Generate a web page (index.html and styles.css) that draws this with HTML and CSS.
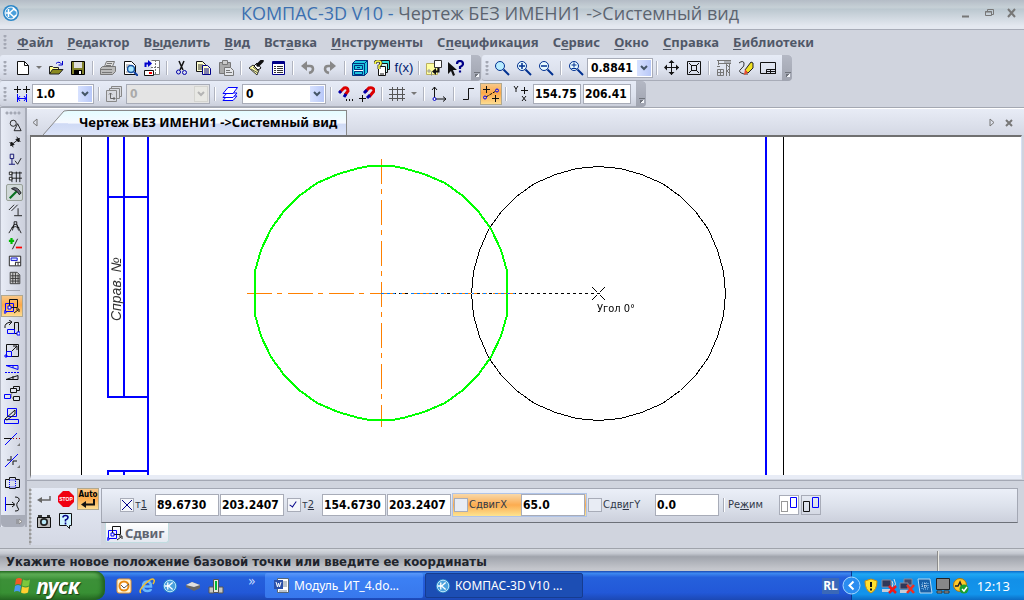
FILE: index.html
```html
<!DOCTYPE html>
<html lang="ru">
<head>
<meta charset="utf-8">
<title>КОМПАС-3D V10</title>
<link rel="stylesheet" href="styles.css">
</head>
<body>
<header class="titlebar">
  <svg class="logo" width="18" height="18" viewBox="0 0 18 18"><circle cx="9" cy="9" r="8" fill="#2a86c8"/><circle cx="9" cy="9" r="6" fill="#4aa0dc" stroke="#fff"/><path d="M6.500 5v8M12 5l-4.500 4 4.500 4M3.500 9h4M11 4l3 3M11 14l3-3" stroke="#fff" stroke-width="1.500" fill="none"/></svg>
  <h1 class="title"><span class="app">КОМПАС-3D V10 -</span> Чертеж БЕЗ ИМЕНИ1 -&gt;Системный вид</h1>
  <div class="winbtns">
    <button aria-label="Свернуть"><svg width="12" height="12"><path d="M2 9.500h7" stroke="#777" stroke-width="2"/></svg></button>
    <button aria-label="Восстановить"><svg width="12" height="12" fill="none" stroke="#777"><path d="M4.500 4V2.500h6v5H9M2 5h7" /><path d="M2.500 4.500h6v4h-6z"/></svg></button>
    <button aria-label="Закрыть"><svg width="12" height="12"><path d="M2 2l7 8M9 2l-7 8" stroke="#777" stroke-width="2"/></svg></button>
  </div>
</header>

<nav class="menubar">
  <span class="grip"></span>
  <a href="#"><u>Ф</u>айл</a><a href="#"><u>Р</u>едактор</a><a href="#">В<u>ы</u>делить</a><a href="#"><u>В</u>ид</a><a href="#">Вст<u>а</u>вка</a><a href="#"><u>И</u>нструменты</a><a href="#">С<u>п</u>ецификация</a><a href="#">С<u>е</u>рвис</a><a href="#"><u>О</u>кно</a><a href="#"><u>С</u>правка</a><a href="#"><u>Б</u>иблиотеки</a>
</nav>

<div class="bars">
 <div class="barrow">
  <div class="bar">
   <span class="grip"></span>
   <button class="tb" aria-label="Создать"><svg class="i" viewBox="0 0 16 16"><path d="M2.500 1.500h7l4 4v9h-11z" fill="#fff" stroke="#111"/><path d="M9.500 1.500v4h4" fill="none" stroke="#111"/></svg></button>
   <button class="drop" aria-label="Список"><svg width="7" height="4"><path d="M0 0h6l-3 3z" fill="#777"/></svg></button>
   <button class="tb" aria-label="Открыть"><svg class="i" viewBox="0 0 16 16"><path d="M1.500 14V6.500h3l1 1h5v2" fill="#ffff90" stroke="#222"/><path d="M1.500 14l3-4.500H15L11 14z" fill="#8a8a20" stroke="#222"/><path d="M8 3.500q3-3 6 1M14.500 1v4h-4" fill="none" stroke="#00c"/></svg></button>
   <button class="tb" aria-label="Сохранить"><svg class="i" viewBox="0 0 16 16"><path d="M1.500 1.500h13v13h-13z" fill="#80802a" stroke="#000"/><path d="M4 2h8v6H4z" fill="#ddd"/><path d="M4 10h8v4H4z" fill="#000"/><path d="M9 11h2v3H9z" fill="#fff"/></svg></button>
   <i class="sep"></i>
   <button class="tb" aria-label="Печать"><svg class="i" viewBox="0 0 16 16" fill="#ddd" stroke="#777"><path d="M4.500 6.500l2-5h8l-2 5"/><path d="M7 3.500h5M6 5.500h5"/><path d="M.5 8.500l2-2h13v5l-3 3H.5z" fill="#bbb"/><path d="M1 9.500h11M2 12.500h10"/></svg></button>
   <button class="tb" aria-label="Просмотр"><svg class="i" viewBox="0 0 16 16"><path d="M2.500 1.500h7l4 4v9h-11z" fill="#fff" stroke="#111"/><path d="M4 5h4M4 7h2M4 12h3" stroke="#888"/><circle cx="9" cy="9" r="3.500" fill="#a8e8ff" stroke="#1550a0" stroke-width="1.500"/><path d="M12 12l4 4" stroke="#1040a0" stroke-width="2"/></svg></button>
   <button class="tb" aria-label="Компоновка"><svg class="i" viewBox="0 0 16 16"><path d="M7.500.5h8v14h-8" fill="#fff" stroke="#777"/><path d="M11.500 0v15M7 7.500h9" stroke="#777" stroke-dasharray="2 1"/><path d="M1.500 7V3.500h3" stroke="#00c" stroke-width="2" fill="none"/><path d="M4 0l4 3.500L4 7z" fill="#00c"/><path d="M.5 10.500h9v5h-9z" fill="#fff" stroke="#111"/><path d="M5 13h3" stroke="red" stroke-width="2"/></svg></button>
   <i class="sep"></i>
   <button class="tb" aria-label="Вырезать"><svg class="i" viewBox="0 0 16 16" fill="none"><path d="M5 1l4 9M10 1L6 10" stroke="#111" stroke-width="1.500"/><circle cx="4.500" cy="12" r="2" stroke="#00a"/><circle cx="10.500" cy="12.500" r="2" stroke="#00a"/></svg></button>
   <button class="tb" aria-label="Копировать"><svg class="i" viewBox="0 0 16 16"><path d="M.5 1.500h6l3 3v7h-9z" fill="#ffffd0" stroke="#111"/><path d="M2 5h5M2 7h4M2 9h4" stroke="#333"/><path d="M6.500 5.500h5l3 3v6h-8z" fill="#ffffd0" stroke="#008"/><path d="M8 9h5M8 11h5M8 13h5" stroke="#008"/></svg></button>
   <button class="tb" aria-label="Вставить"><svg class="i" viewBox="0 0 16 16" stroke="#777"><path d="M1.500 2.500h11v11h-11z" fill="#aaa"/><path d="M4.500.5h5v4h-5z" fill="#ccc"/><path d="M6.500 7.500h6l3 3v5h-9z" fill="#e4e6ea"/><path d="M8 10.500h4M8 12.500h6"/></svg></button>
   <i class="sep"></i>
   <button class="tb" aria-label="Свойства"><svg class="i" viewBox="0 0 16 16"><path d="M1 8l4-3 6 5-2 5z" fill="#ffffa0" stroke="#333"/><path d="M3 9l7 4M5 7l5 4" stroke="#555"/><path d="M6 6l3-3 4 5-3 2z" fill="#fff" stroke="#111"/><path d="M10 5l4-4" stroke="#111" stroke-width="3.500" stroke-linecap="round"/></svg></button>
   <button class="tb" aria-label="Таблица"><svg class="i" viewBox="0 0 16 16"><path d="M2.500 1.500h12v13h-12z" fill="#fff" stroke="#008"/><path d="M2 2h13v2H2z" fill="#008"/><path d="M4 6.500h2M4 8.500h2M4 10.500h2M4 12.500h2M7 6.500h6M7 8.500h6M7 10.500h6M7 12.500h6" stroke="#333"/></svg></button>
   <i class="sep"></i>
   <button class="tb" aria-label="Отменить"><svg class="i" viewBox="0 0 16 16"><path d="M5 6h5q3 0 3 3t-4 4" fill="none" stroke="#888" stroke-width="2.500"/><path d="M1 6l6-5v10z" fill="#888"/></svg></button>
   <button class="tb" aria-label="Повторить"><svg class="i" viewBox="0 0 16 16"><path d="M10 6H6q-3 0-3 3t4 4" fill="none" stroke="#888" stroke-width="2.500"/><path d="M14 6L8 1v10z" fill="#888"/></svg></button>
   <i class="sep"></i>
   <button class="tb" aria-label="Менеджер"><svg class="i" viewBox="0 0 16 16"><path d="M.5 3.500l3-3h12v12l-3 3H.5z" fill="#20c8e0" stroke="#003080"/><path d="M.5 3.500h12v12M12.500 3.500l3-3M2.500 5.500h8v4h-8zM2.500 11.500h8v3h-8zM5 7.500h3" fill="none" stroke="#003080"/><path d="M2 10.500h9" stroke="#fff"/></svg></button>
   <button class="tb" aria-label="Библиотеки"><svg class="i" viewBox="0 0 16 16"><path d="M6.500.5h9v9h-9z" fill="#30e0e0" stroke="#111"/><path d="M5.500 3.500h8v9h-8z" fill="#c8f4f4" stroke="#111"/><path d="M4.500 6.500h7v9h-7z" fill="#fff" stroke="#111"/><path d="M6 14h4" stroke="#111"/><path d="M1 4q0-3 3-3t3 2q0 2-2 3v3" fill="none" stroke="#333" stroke-width="3"/><path d="M1 4q0-3 3-3t3 2q0 2-2 3v3" fill="none" stroke="#ff4" stroke-width="1.500"/></svg></button>
   <button class="tb fx" aria-label="Переменные">f(x)</button>
   <i class="sep"></i>
   <button class="tb" aria-label="Обновить"><svg class="i" viewBox="0 0 16 16"><path d="M.5 3.500h11v11H.5z" fill="#ffffa0" stroke="#bbb060"/><path d="M8.500.5h7v7h-7z" fill="#fff" stroke="#333"/><path d="M5.500 15.500v-4" fill="none" stroke="#888"/><path d="M3 9v4M1 11h4" stroke="#999"/><path d="M12.500 8v3.500H9" fill="none" stroke="#111" stroke-width="2"/><path d="M10 8v7l-4-3.500z" fill="#111"/></svg></button>
   <button class="tb" aria-label="Справка"><svg class="i" viewBox="0 0 16 16"><path d="M0 2v12l3-3 2 5 2-1-2-5h4z" fill="#111"/><path d="M9 4q0-3 3-3t3 3q0 2-3 3v2M12 10.500v2" fill="none" stroke="#008" stroke-width="2.200"/></svg></button>
   <span class="cap"></span>
  </div>
  <div class="bar">
   <span class="grip"></span>
   <button class="tb" aria-label="Лупа"><svg class="i" viewBox="0 0 16 16"><circle cx="6" cy="6" r="4.500" fill="#b8ecff" stroke="#003090"/><path d="M9.500 9.500l5.500 5.500" stroke="#003090" stroke-width="2"/></svg></button>
   <button class="tb" aria-label="Увеличить"><svg class="i" viewBox="0 0 16 16"><circle cx="6" cy="6" r="4.500" fill="#e8faff" stroke="#003090"/><path d="M9.500 9.500l5.500 5.500" stroke="#003090" stroke-width="2"/><path d="M3 6h6M6 3v6" stroke="#003090" stroke-width="1.500"/></svg></button>
   <button class="tb" aria-label="Уменьшить"><svg class="i" viewBox="0 0 16 16"><circle cx="6" cy="6" r="4.500" fill="#e8faff" stroke="#003090"/><path d="M9.500 9.500l5.500 5.500" stroke="#003090" stroke-width="2"/><path d="M3 6h6" stroke="#003090" stroke-width="1.500"/></svg></button>
   <i class="sep"></i>
   <button class="tb" aria-label="Масштаб"><svg class="i" viewBox="0 0 16 16"><circle cx="6" cy="6" r="4.500" fill="#e8faff" stroke="#003090"/><path d="M9.500 9.500l5.500 5.500" stroke="#003090" stroke-width="2"/><path d="M3.500 5h5M6 2.500v5M3.500 8.500h5" stroke="#003090"/></svg></button>
   <span class="combo w66"><select aria-label="Масштаб"><option>0.8841</option></select><i class="arr"><svg width="8" height="6"><path d="M1 1l3 3 3-3" fill="none" stroke="#456" stroke-width="2"/></svg></i></span>
   <i class="sep"></i>
   <button class="tb" aria-label="Сдвинуть"><svg class="i" viewBox="0 0 16 16"><path d="M7.500 1v14M1 7.500h14" stroke="#111"/><path d="M7.500 0l3 3h-6zM7.500 15l3-3h-6zM0 7.500l3-3v6zM15 7.500l-3-3v6z" fill="#111"/></svg></button>
   <button class="tb" aria-label="Показать все"><svg class="i" viewBox="0 0 16 16" fill="none" stroke="#111"><path d="M1.500 1.500h13v13h-13zM5.500 5.500h5v5h-5zM3 3l3 3M13 3l-3 3M3 13l3-3M13 13l-3-3"/></svg></button>
   <i class="sep"></i>
   <button class="tb" aria-label="Кран"><svg class="i" viewBox="0 0 16 16" fill="none" stroke="#777"><path d="M1 .5h14M3 3.500h12M8 2h7M2.500 1v4M10.500 4v12M13.500 4v12" /><path d="M11 5l3 3-3 3 3 3" /><path d="M1.500 9.500h6v6h-6zM1 12.500h6M4.500 9v6"/><path d="M1 6.500h3"/></svg></button>
   <button class="tb" aria-label="Карандаш"><svg class="i" viewBox="0 0 16 16"><path d="M1 3q4-3 5 0t-3 6 3 5h4" fill="none" stroke="#333"/><path d="M7 10l6-8 2 1v5l-5 5z" fill="#f0e020" stroke="#222"/><path d="M7 9l3 4-4 2z" fill="#e85030"/></svg></button>
   <button class="tb" aria-label="Штамп"><svg class="i" viewBox="0 0 16 16" fill="none" stroke="#111"><path d="M.5 2.500h15v11H.5z"/><path d="M6.500 9.500h9v4h-9zM7 11.500h8M10.500 10v3"/></svg></button>
   <span class="cap"></span>
  </div>
 </div>
 <div class="barrow">
  <div class="bar">
   <span class="grip"></span>
   <button class="tb n" aria-label="Шаг"><svg class="i" viewBox="0 0 16 16" fill="none"><path d="M3.500 0v7M0 3.500h7M12.500 0v7M9 3.500h7" stroke="#111"/><path d="M3.500 8v8M12.500 8v8M4 12.500h8M6 10l-2 2.500L6 15M10 10l2 2.500-2 2.500" stroke="#00f"/></svg></button>
   <span class="combo w62"><select aria-label="Шаг курсора"><option>1.0</option></select><i class="arr"><svg width="8" height="6"><path d="M1 1l3 3 3-3" fill="none" stroke="#456" stroke-width="2"/></svg></i></span>
   <i class="sep"></i>
   <button class="tb" aria-label="Вид"><svg class="i" viewBox="0 0 16 16" fill="#d8dae0" stroke="#888"><path d="M5.500.5h10v10h-10z"/><path d="M3.500 2.500h10v10h-10z"/><path d="M.5 4.500h10v11H.5z"/><path d="M4.500 7v5.500H9M3 8.500L4.500 7 6 8.500M7.500 11L9 12.500 7.500 14" fill="none" stroke="#666"/></svg></button>
   <span class="combo w84 off"><select aria-label="Номер вида" disabled><option>0</option></select><i class="arr"><svg width="8" height="6"><path d="M1 1l3 3 3-3" fill="none" stroke="#b4b4b4" stroke-width="2"/></svg></i></span>
   <i class="sep"></i>
   <button class="tb" aria-label="Слои"><svg class="i" viewBox="0 0 16 16" fill="#fff" stroke="#00f"><path d="M1 14.500L5 10h10l-4 4.500z"/><path d="M1 11.500L5 7h10l-4 4.500z"/><path d="M1 7.500L6 1.500h9.500l-4.500 6z"/></svg></button>
   <span class="combo w84"><select aria-label="Слой"><option>0</option></select><i class="arr"><svg width="8" height="6"><path d="M1 1l3 3 3-3" fill="none" stroke="#456" stroke-width="2"/></svg></i></span>
   <i class="sep"></i>
   <button class="tb m" aria-label="Привязки"><svg class="i" viewBox="0 0 16 16" fill="none"><path d="M2 6l4-4q4-1 4 3l-3 4" stroke="#d00" stroke-width="3"/><path d="M1 7l2-2M6 11l2-3" stroke="#00a" stroke-width="3"/><path d="M8 14h1M11 14h1M14 14h1" stroke="#111" stroke-width="2"/></svg></button>
   <button class="tb" aria-label="Магнит"><svg class="i" viewBox="0 0 16 16" fill="none"><path d="M6 6l4-4q5-1 5 3l-5 6" stroke="#d00" stroke-width="3"/><path d="M5 7l3-3M8 12l3-3" stroke="#00a" stroke-width="3"/><path d="M3.500 9v7M0 12.500h7" stroke="#111"/></svg></button>
   <i class="sep"></i>
   <button class="tb" aria-label="Сетка"><svg class="i" viewBox="0 0 16 16"><path d="M3.500 1v14M8.500 1v14M13.500 1v14M0 3.500h16M0 8.500h16M0 12.500h16" stroke="#555"/></svg></button>
   <button class="drop wide" aria-label="Список"><svg width="7" height="4"><path d="M0 0h6l-3 3z" fill="#777"/></svg></button>
   <i class="sep"></i>
   <button class="tb" aria-label="Система координат"><svg class="i" viewBox="0 0 16 16" fill="none" stroke="#111"><path d="M3.500 1v12H15M1 4l2.500-3L6 4M12 10.500l3 2.500-3 2.500"/><circle cx="3.500" cy="13" r="1.500" stroke="#00c" fill="#fff"/></svg></button>
   <i class="sep"></i>
   <button class="tb" aria-label="Ортогонально"><svg class="i" viewBox="0 0 16 16"><path d="M2 13.500h5.500v-11H13" fill="none" stroke="#111"/></svg></button>
   <button class="tb on" aria-label="Округление"><svg class="i" viewBox="0 0 16 16" fill="none"><path d="M3.500 0v7M0 3.500h7M12.500 9v7M9 12.500h7" stroke="#111"/><path d="M3 11l10-6" stroke="#111" stroke-dasharray="3 1"/><circle cx="2" cy="11.500" r="1.500" stroke="#00f"/><circle cx="14" cy="4.500" r="1.500" stroke="#00f"/></svg></button>
   <i class="sep"></i>
   <button class="tb" aria-label="Координаты"><svg class="i" viewBox="0 0 16 16" fill="none" stroke="#111"><path d="M1 0l2 3 2-3M3 3v3M9 10l4 5M13 10l-4 5"/><path d="M11.500 1v7M8 4.500h7"/></svg></button>
   <input class="num w48" aria-label="X" value="154.75"><input class="num w48" aria-label="Y" value="206.41">
   <span class="cap"></span>
  </div>
 </div>
</div>

<div class="work">
 <aside class="side">
  <span class="sidegrip"></span>
  <button class="sb" aria-label="Геометрия"><svg class="i" viewBox="0 0 16 16" fill="none" stroke="#111"><circle cx="6" cy="6" r="3.500"/><path d="M11 6.500l4 8H7z"/></svg></button>
  <button class="sb" aria-label="Размеры"><svg class="i" viewBox="0 0 16 16" stroke="#111"><path d="M3 12l10-8M2 8l4 6M10 2l4 6" /><path d="M3 12l1-4 3 3zM13 4l-1 4-3-3z" fill="#111"/></svg></button>
  <button class="sb" aria-label="Обозначения"><svg class="i" viewBox="0 0 16 16" fill="none" stroke="#111"><path d="M2.500 2.500h4v5h-4zM4.500 8v6M1 14h7" stroke="#006"/><path d="M8 10l3 4 4-7"/></svg></button>
  <button class="sb" aria-label="Обозначения СПДС"><svg class="i" viewBox="0 0 16 16" fill="none" stroke="#111"><path d="M4.500 3v12M9.500 3v12M13.500 3v12M3 4.500h13M3 10.500h13"/><path d="M1.500 3.500h3v3h-3zM1.500 9.500h3v3h-3z" fill="#fff"/></svg></button>
  <button class="sb press" aria-label="Редактирование"><svg class="i" viewBox="0 0 16 16"><path d="M2 14l8-8" stroke="#087020" stroke-width="2.500"/><path d="M4 3q5-3 9 2l2 3-2 2-3-4z" fill="#667" stroke="#111"/></svg></button>
  <button class="sb" aria-label="Параметризация"><svg class="i" viewBox="0 0 16 16" stroke="#111"><path d="M1 8l6-6M4 9l7-7M11.500 6v8M7 14.500h9"/></svg></button>
  <button class="sb" aria-label="Измерения"><svg class="i" viewBox="0 0 16 16" fill="none" stroke="#111"><path d="M7 2h3v3H7zM7 5L1 15M10 5l5 10M7 5l-2 7M10 5l2 7M4 9q4-3 9 0"/></svg></button>
  <button class="sb" aria-label="Выделение"><svg class="i" viewBox="0 0 16 16"><path d="M4 1v7M1 4.500h6" stroke="#0b0" stroke-width="2.500"/><path d="M11 2L5 14" stroke="#111"/><path d="M9 12h7" stroke="red" stroke-width="2"/></svg></button>
  <button class="sb" aria-label="Спецификация"><svg class="i" viewBox="0 0 16 16" fill="none" stroke="#111"><path d="M1.500 2.500h13v11h-13z" fill="#fff"/><path d="M3.500 4.500h7v3h-7z" fill="#cdf" stroke="#00c"/><path d="M8 9.500h6M8.500 10v3M11.500 10v3"/></svg></button>
  <button class="sb" aria-label="Отчеты"><svg class="i" viewBox="0 0 16 16" fill="#ccc" stroke="#333"><path d="M2.500 1.500h8l3 3v10h-11z"/><path d="M5.500 2v12M8.500 2v12M11.500 4v10M3 5.500h10M3 8.500h10M3 11.500h10"/></svg></button>
  <i class="hsep"></i>
  <button class="sb big on" aria-label="Сдвиг"><svg class="i" viewBox="0 0 16 16" fill="none"><path d="M1.500 5.500h8v8h-8z" stroke="#00f"/><path d="M5.500 1.500h8v8h-8z" stroke="#111"/><path d="M0 13h2v2H0zM4 8h3v3H4z" fill="#fff" stroke="#00f"/><path d="M10 15l4-3M12 11h3v3" stroke="#111"/></svg></button>
  <button class="sb big" aria-label="Поворот"><svg class="i" viewBox="0 0 16 16" fill="none"><path d="M10.500 2.500h4v11h-4z" stroke="#111"/><path d="M3.500 9.500h7v4h-7z" stroke="#00f"/><path d="M13 12h3v3h-3z" fill="#fff" stroke="#00f"/><path d="M1 8q-1-5 6-6M5 0l3 2-3 3" stroke="#111"/></svg></button>
  <button class="sb big" aria-label="Масштабирование"><svg class="i" viewBox="0 0 16 16" fill="none"><path d="M2.500 2.500h12v12h-12z" stroke="#111"/><path d="M2.500 9.500h5v5h-5zM1 13h2v2H1z" stroke="#00f"/><path d="M8 9l5-5M9 4h4v4" stroke="#111"/></svg></button>
  <button class="sb big" aria-label="Симметрия"><svg class="i" viewBox="0 0 16 16" fill="none"><path d="M2 1.500h12v4zM9 1v3" stroke="#00f"/><path d="M1 8.500h15" stroke="#00f" stroke-dasharray="2 1"/><path d="M2 15.500h12v-4zM9 15v-3" stroke="#111"/></svg></button>
  <button class="sb big" aria-label="Копия"><svg class="i" viewBox="0 0 16 16" fill="none"><path d="M.5 8.500h6v4h-6z" stroke="#00f"/><path d="M9.500.5h6v4h-6z" stroke="#111"/><path d="M6.500 2.500h6v4h-6zM9.500 10.500h6v4h-6z" fill="#e0e4ee" stroke="#111"/><path d="M9 13L7 10l1-3" stroke="#888"/></svg></button>
  <button class="sb big" aria-label="Деформация"><svg class="i" viewBox="0 0 16 16" fill="none"><path d="M3.500.5h9v8h-9zM.5 11.500h14v4H.5z" stroke="#00f"/><path d="M1 11L11 2v4L3 12z" stroke="#111"/></svg></button>
  <button class="sb big" aria-label="Усечь"><svg class="i" viewBox="0 0 16 16"><path d="M1 15L13 3" stroke="#00f"/><path d="M0 8.500h8" stroke="#111"/><path d="M9 8.500h7" stroke="#900" stroke-dasharray="1 2"/><path d="M16 13v3h-3z" fill="#777"/></svg></button>
  <button class="sb big" aria-label="Разбить"><svg class="i" viewBox="0 0 16 16"><path d="M1 15L14 2" stroke="#00f"/><path d="M3 8h4v-4M9 13V9h4" fill="none" stroke="#111"/><path d="M16 13v3h-3z" fill="#777"/></svg></button>
  <button class="sb big" aria-label="Контур"><svg class="i" viewBox="0 0 16 16" fill="none"><path d="M5.500 3.500h6v2h4v8h-4v1h-6v-1h-4v-8h4z" stroke="#111"/><path d="M5.500 6v7h6V6z" stroke="#00f" stroke-dasharray="1 1"/></svg></button>
  <button class="sb big" aria-label="Продлить"><svg class="i" viewBox="0 0 16 16" fill="none" stroke="#111"><path d="M1.500 1v14" stroke="#00f"/><path d="M2 8.500h8M8 6l3 2.500L8 11M11 1q5 0 4 4-4 3-1 7 2 3-3 3"/></svg></button>
  <span class="sidecap"><svg width="7" height="7"><path d="M1 1v5M3 1l3 2.500L3 6z" stroke="#888" fill="#fff"/></svg></span>
 </aside>

 <main class="doc">
  <div class="tabs">
   <button class="prev" aria-label="Назад"><svg width="6" height="10"><path d="M5 1v7L1 4.500z" fill="none" stroke="#777"/></svg></button>
   <svg class="slant" width="25" height="25" viewBox="0 0 25 25"><defs><linearGradient id="tg" x2="0" y2="1"><stop offset="0" stop-color="#e4fdff"/><stop offset=".5" stop-color="#f6f9ff"/><stop offset=".55" stop-color="#cfdaf5"/><stop offset="1" stop-color="#dce4f8"/></linearGradient></defs><path d="M0 25L21 1l4-1v25z" fill="url(#tg)"/><path d="M0 25L21 1l4-.5" fill="none" stroke="#888"/></svg>
   <a class="tab" href="#">Чертеж БЕЗ ИМЕНИ1 -&gt;Системный вид</a>
   <div class="tabend"><button aria-label="Вперед"><svg width="6" height="10"><path d="M1 1v7l4-3.500z" fill="none" stroke="#777"/></svg></button><button aria-label="Закрыть вкладку"><svg width="8" height="8"><path d="M1 1l6 6M7 1L1 7" stroke="#777" stroke-width="2"/></svg></button></div>
  </div>
  <div class="canvas">
   <svg class="drawing" height="336">
    <g transform="translate(-31 -137)" shape-rendering="crispEdges" fill="none">
     <path d="M81.500 137v900M783.500 137v900" stroke="#000"/>
     <path d="M148 137v900M766 137v900M108 137v261M124 137v260M108 197h40M107 397h41M107 471h41M108 471v300M124 471v300" stroke="#00f" stroke-width="2"/>
     <path d="M247 293.500h268" stroke="#ff8000" stroke-dasharray="25 5 5 6"/>
     <path d="M381.500 159v268" stroke="#ff8000" stroke-dasharray="25 5 5 6"/>
     <polygon transform="translate(598.500 293.500)" stroke="#000" points="127,0 125,22 119,43 110,64 97,82 82,97 64,110 43,119 22,125 0,127 -22,125 -43,119 -64,110 -82,97 -97,82 -110,64 -119,43 -125,22 -127,0 -125,-22 -119,-43 -110,-64 -97,-82 -82,-97 -64,-110 -43,-119 -22,-125 0,-127 22,-125 43,-119 64,-110 82,-97 97,-82 110,-64 119,-43 125,-22"/>
     <polygon transform="translate(381 293)" stroke="#0f0" stroke-width="2" points="126,0 126,22 120,43 110,64 97,82 82,97 64,110 43,119 22,125 11,127 -11,127 -22,125 -43,119 -64,110 -82,97 -97,82 -110,64 -120,43 -126,22 -126,-22 -120,-43 -110,-64 -97,-82 -82,-97 -64,-110 -43,-119 -22,-125 -11,-127 11,-127 22,-125 43,-119 64,-110 82,-97 97,-82 110,-64 120,-43 126,-22"/>
     <path class="rubber" d="M381 293.500h213" stroke="#fff" stroke-dasharray="3 3"/>
     <path d="M592 287l5 5M605 287l-5 5M592 300l5-5M605 300l-5-5M597 293.500h3" stroke="#000"/>
    </g>
    <g transform="translate(-31 -137)">
     <text class="angle" x="597" y="312">Угол 0°</text>
     <text class="stamp" transform="translate(121 321) rotate(-90)">Справ. №</text>
    </g>
   </svg>
  </div>
  <section class="props">
   <div class="cmds">
    <button class="cb" aria-label="Ввод"><svg class="i" viewBox="0 0 16 16"><path d="M4 9h10V5" fill="none" stroke="#666" stroke-width="1.500"/><path d="M1 9l5-3v6z" fill="#666"/></svg></button>
    <button class="cb" aria-label="Прервать"><svg class="i" viewBox="0 0 16 16"><path d="M5 0h6l5 5v6l-5 5H5l-5-5V5z" fill="#f00010"/><text class="stop" x="8" y="10">STOP</text></svg></button>
    <button class="cb on auto" aria-label="Автосоздание"><span>Auto</span><svg width="16" height="9"><path d="M4 5.500h10V0" fill="none" stroke="#111" stroke-width="2"/><path d="M1 5.500L6 2v7z" fill="#111"/></svg></button>
    <button class="cb" aria-label="Запомнить"><svg class="i" viewBox="0 0 16 16"><path d="M1.500 4.500h13v10h-13z" fill="#bbb" stroke="#111"/><path d="M2 2h4v2H2zM11 2h3v2h-3z" fill="#333"/><circle cx="8" cy="9" r="4" fill="#222"/><circle cx="8" cy="9" r="2.300" fill="#b8e8f8"/></svg></button>
    <button class="cb" aria-label="Помощь"><svg class="i" viewBox="0 0 16 16"><path d="M1.500.5h12v12h-2v3l-3-3h-7z" fill="#d0f4ff" stroke="#111"/><path d="M5 4.500q0-2 2.500-2t2.500 2q0 1.500-2.500 2.500v1.500M7.500 9.500v2" fill="none" stroke="#008" stroke-width="1.600"/></svg></button>
   </div>
   <div class="params">
    <div class="panel">
     <input type="checkbox" class="ck cross" id="t1"><label class="s" for="t1">т<u>1</u></label>
     <input class="num w64" aria-label="т1 X" value="89.6730"><input class="num w64" aria-label="т1 Y" value="203.2407">
     <input type="checkbox" class="ck tick" id="t2" checked><label class="s" for="t2">т<u>2</u></label>
     <input class="num w64" aria-label="т2 X" value="154.6730"><input class="num w64" aria-label="т2 Y" value="203.2407">
     <div class="hot"><input type="checkbox" class="ck" id="dx"><label class="l" for="dx">С<u>д</u>вигX</label><input class="num w64" aria-label="Сдвиг X" value="65.0"></div>
     <input type="checkbox" class="ck" id="dy"><label class="l" for="dy">Сдв<u>и</u>гY</label>
     <input class="num w64" aria-label="Сдвиг Y" value="0.0">
     <i class="psep"></i><span class="mode">Ре<u>ж</u>им</span>
     <button class="mb lit" aria-label="Удалять исходные"><svg width="18" height="18" fill="none"><path d="M1.500 5.500h6v10h-6z" stroke="#333" stroke-dasharray="1 1"/><path d="M10.500 1.500h6v10h-6z" stroke="#00f"/></svg></button>
     <button class="mb" aria-label="Оставлять исходные"><svg width="18" height="18" fill="none"><path d="M1.500 5.500h6v10h-6z" stroke="#111"/><path d="M10.500 1.500h6v10h-6z" stroke="#00f"/></svg></button>
    </div>
    <a class="ptab" href="#"><svg class="i" viewBox="0 0 16 16" fill="none"><path d="M1.500 5.500h8v8h-8z" stroke="#00f"/><path d="M5.500 1.500h8v8h-8z" stroke="#111"/><path d="M0 13h2v2H0zM4 8h3v3H4z" fill="#fff" stroke="#00f"/><path d="M10 15l4-3M12 11h3v3" stroke="#111"/></svg>Сдвиг</a>
   </div>
  </section>
 </main>
</div>

<footer class="status"><span>Укажите новое положение базовой точки или введите ее координаты</span><i></i></footer>

<div class="taskbar">
 <button class="start"><svg width="20" height="20" viewBox="0 0 20 20"><path d="M3 3q3-2 6 0l-1 6q-3-2-6 0z" fill="#f05a28"/><path d="M10 3.500q4 2 7 0l-1 6q-4 2-7 0z" fill="#7cc83c"/><path d="M2 10q3-2 6 0l-1 6q-3-2-6 0z" fill="#4a9af0"/><path d="M9 10.500q4 2 7 0l-1 6q-4 2-7 0z" fill="#ffd030"/></svg>пуск</button>
 <div class="quick">
  <button aria-label="Outlook"><svg class="i" viewBox="0 0 16 16"><rect x="1" y="1" width="14" height="14" rx="2" fill="#fff4d8" stroke="#e89830"/><circle cx="8" cy="8" r="4.500" fill="#fff" stroke="#e88a10" stroke-width="2"/><path d="M5 7l3 3 5-4" stroke="#555" fill="none"/></svg></button>
  <button aria-label="Internet Explorer"><svg class="i" viewBox="0 0 16 16"><path d="M4 8.500h8q0-5-4-5t-4 5q0 4.500 4.500 4.500 3 0 3.500-2" fill="none" stroke="#68b8ff" stroke-width="2.500"/><path d="M2 15q-3-2 4-9t9-4q1 1-1 4" fill="none" stroke="#f0c030" stroke-width="1.500"/></svg></button>
  <button aria-label="КОМПАС"><svg class="i" viewBox="0 0 18 18"><circle cx="9" cy="9" r="8" fill="#2a86c8"/><circle cx="9" cy="9" r="6.500" fill="#4aa0dc" stroke="#cef"/><path d="M6.500 5v8M12 5l-4.500 4 4.500 4M3 9h4" stroke="#fff" stroke-width="1.500" fill="none"/></svg></button>
  <button aria-label="Диск"><svg class="i" viewBox="0 0 16 16"><path d="M1 7l6-3 8 3v3l-6 3-8-4z" fill="#666"/><path d="M1 7l6-3 8 3-6 2z" fill="#e0e0e0"/></svg></button>
  <button aria-label="Устройство"><svg class="i" viewBox="0 0 16 16"><path d="M1 9h5v6H1zM10 9h5v6h-5z" fill="#c8c8c0" stroke="#555"/><path d="M5.500 1.500h5v13h-5z" fill="#e8e8e0" stroke="#555"/><path d="M7 3h2v9H7z" fill="#0b3"/></svg></button>
  <span class="more">»</span>
 </div>
 <button class="task"><svg class="i" viewBox="0 0 16 16"><path d="M3.500.5h11v14h-11z" fill="#fff" stroke="#567"/><path d="M9 4h4M9 6h4M9 8h4M5 13h8" stroke="#789"/><path d="M0 2h9v9H0z" fill="#2a50a8"/><path d="M2 4l1.500 5 1-4 1 4L7 4" fill="none" stroke="#fff"/></svg>Модуль_ИТ_4.do...</button>
 <button class="task cur"><svg class="i" viewBox="0 0 18 18"><circle cx="9" cy="9" r="8" fill="#2a86c8"/><circle cx="9" cy="9" r="6.500" fill="#4aa0dc" stroke="#cef"/><path d="M6.500 5v8M12 5l-4.500 4 4.500 4M3 9h4" stroke="#fff" stroke-width="1.500" fill="none"/></svg>КОМПАС-3D V10 ...</button>
 <span class="lang">RL</span>
 <div class="tray">
  <button class="hide" aria-label="Скрыть"><svg width="19" height="19" viewBox="0 0 19 19"><circle cx="9.500" cy="9.500" r="8.500" fill="#2a8cf0" stroke="#a8d8ff"/><path d="M11.500 5.500l-4 4 4 4" fill="none" stroke="#fff" stroke-width="2"/></svg></button>
  <svg class="i" viewBox="0 0 16 16"><path d="M8 1l6 2q0 9-6 12Q2 12 2 3z" fill="#ffe030" stroke="#c89010"/><path d="M8 4v5M8 10.500v2" stroke="#111" stroke-width="2"/></svg>
  <svg class="i" viewBox="0 0 16 16"><path d="M1 2h9v7H1z" fill="#303858" stroke="#889"/><path d="M1 11h8v3H1z" fill="#c8ccd8"/><path d="M11 3q2 3 0 6M13 1q3 5 0 9" stroke="#ddd" fill="none"/><path d="M8 8l7 7M15 8l-7 7" stroke="#f01818" stroke-width="2.500"/></svg>
  <svg class="i" viewBox="0 0 16 16"><path d="M5 1h8v6H5z" fill="#404868" stroke="#889"/><path d="M1 5h8v6H1z" fill="#303858" stroke="#889"/><path d="M1 12h8v3H1z" fill="#c8ccd8"/><path d="M8 7l7 8M15 7l-7 8" stroke="#f03020" stroke-width="2.500"/></svg>
  <svg class="i" viewBox="0 0 16 16"><path d="M1 1h12l2 14H3z" fill="#1860a8" stroke="#b8d8f0"/><path d="M5 5h6v6H5z" fill="none" stroke="#8cf" stroke-dasharray="1 1"/><path d="M8 5v6M5 8h6" stroke="#fff" stroke-dasharray="1 1"/></svg>
  <svg class="i" viewBox="0 0 16 16"><path d="M1.500.5h13v11h-13z" fill="#888" stroke="#222"/><path d="M2 13h5v2H2zM9 13h5v2H9z" fill="#aaa" stroke="#333"/></svg>
  <svg class="i" viewBox="0 0 16 16"><circle cx="7" cy="7" r="6.500" fill="#ffc828" stroke="#a87810"/><path d="M2 8h3l2-4 2 5" stroke="#222" fill="none" stroke-width="1.500"/><circle cx="11" cy="11" r="4.500" fill="#18a030"/><path d="M9 11l2 2 3-4" stroke="#fff" fill="none" stroke-width="1.500"/></svg>
  <time>12:13</time>
 </div>
</div>
</body>
</html>
```

FILE: styles.css
```css
* { box-sizing: border-box; }
body {
  margin: 0;
  min-height: 100vh;
  display: flex;
  flex-direction: column;
  background: #d0d4de;
  font-family: "DejaVu Sans Condensed", "Noto Sans", sans-serif;
  font-size: 12px;
  color: #000;
  overflow: hidden;
}
button, input, select { font: inherit; margin: 0; padding: 0; border: 0; background: none; color: inherit; border-radius: 0; }
a { color: inherit; text-decoration: none; }
button { display: flex; align-items: center; justify-content: center; flex: none; }
svg { flex: none; display: block; }
.i { width: 16px; height: 16px; }

.titlebar {
  height: 30px; flex: none;
  display: flex; align-items: center;
  padding: 0 6px 4px 2px;
  background: linear-gradient(#b4bcc6, #c6d0d6 25%, #bcc8d0 32%, #e4e8f0 90%);
  border-bottom: 1px solid #a8acb8;
}
.title { flex: 1; margin: 0; text-align: center; font: 18px/24px "Open Sans", "Noto Sans", sans-serif; color: #5c6470; white-space: nowrap; }
.app { color: #3c70b0; }
.winbtns { display: flex; gap: 11px; }

.menubar {
  height: 25px; flex: none;
  display: flex; align-items: center; gap: 14px;
  padding-bottom: 1px;
  font: bold 13px/18px "Noto Sans", sans-serif;
  color: #505868;
}
.menubar .grip { margin-right: -9px; }
.menubar u { text-underline-offset: 2px; }
.grip { width: 12px; height: 14px; flex: none; background: radial-gradient(circle at 5px 1px, #a4a8b4 1px, transparent 2px) 0 0 / 12px 4px; }

.bars { flex: none; border-bottom: 1px solid #a4a8b2; }
.barrow { display: flex; gap: 1px; height: 26px; }
.bar {
  display: flex; align-items: center;
  background: linear-gradient(#e6ebf6, #dde2ee 60%, #ccd0dc);
  border-bottom: 1px solid #a8acb8;
  border-radius: 3px 3px 5px 3px;
}
.bar + .bar .grip { width: 9px; }
.bar + .bar .tb + .cap { margin-left: 3px; }
.tb { width: 22px; height: 22px; }
.tb.n { width: 19px; }
.tb.m { width: 21px; }
.fx { font: 13px "Liberation Sans", sans-serif; color: #002070; }
.drop { width: 11px; height: 22px; }
.drop.wide { width: 12px; }
.sep { width: 2px; height: 14px; margin: 0 3px; flex: none; background: #b0b4c0; border-right: 1px solid #fff; }
.cap { width: 10px; height: 26px; margin: 0 0 -1px 4px; flex: none; border-radius: 0 4px 4px 0; background: linear-gradient(#70747c, #70747c) 3px 17px / 6px 1px no-repeat, linear-gradient(135deg, #70747c 50%, #f4f6fa 50%) 4px 19px / 4px 3px no-repeat, linear-gradient(#b4b8c4, #a0a4b0); }
.on { background: linear-gradient(#f8c888, #fca848 45%, #fddc90); border: 1px solid #b0a890; }

.combo { position: relative; display: flex; height: 20px; flex: none; margin: 0 1px; background: #fff; border: 1px solid #a8acb8; }
.bar + .bar .combo { margin: 0; }
.combo select { appearance: none; width: 100%; padding: 0 18px 0 3px; font-weight: bold; overflow: hidden; }
.combo .arr { position: absolute; right: 1px; top: 1px; bottom: 1px; width: 14px; display: flex; align-items: center; justify-content: center; background: linear-gradient(90deg, #d8e2ff, #b8c8f8); pointer-events: none; }
.combo.off { background: #e4e4e4; }
.combo.off select { color: #aaa; opacity: 1; }
.combo.off .arr { background: #e8e8e4; border: 1px solid #d4d4d0; }
.w48 { width: 48px; } .w62 { width: 62px; } .w64 { width: 64px; } .w66 { width: 66px; } .w84 { width: 84px; }
.num { height: 20px; flex: none; padding: 0 1px; margin: 0 1px; background: #fff; border: 1px solid #a8acb8; font-weight: bold; }

.work { flex: 1; display: flex; min-height: 0; }
.side { width: 27px; flex: none; align-self: flex-start; display: flex; flex-direction: column; align-items: flex-start; padding-top: 2px; border-left: 1px solid #b0b4c0; border-right: 2px solid #a8acb8; background: linear-gradient(90deg, #e8ecf6, #ccd0dc); }
.sidegrip { width: 16px; height: 6px; margin-left: 4px; flex: none; background: radial-gradient(circle at 2px 3px, #a4a8b4 1px, transparent 2px) 0 0 / 4px 6px; }
.sb { width: 17px; height: 17px; margin-left: 5px; }
.sb .i { width: 14px; height: 14px; }
.sb.press { border: 1px solid #98a098; border-radius: 2px; background: #d0d8d8; }
.hsep { width: 14px; height: 1px; margin: 4px 0 4px 5px; background: #a4a8b2; flex: none; }
.sb.big { width: 22px; height: 22px; margin-left: 0; }
.sb.big .i { width: 16px; height: 16px; }
.sidecap { width: 100%; height: 12px; display: flex; align-items: center; justify-content: flex-end; padding-right: 2px; background: #a8acb8; border-radius: 0 0 4px 4px; }

.doc { flex: 1; min-width: 0; display: flex; flex-direction: column; }
.tabs { height: 27px; flex: none; display: flex; align-items: flex-end; padding: 1px 5px 0 0; background: linear-gradient(#e8ecf6, #d4d8e4); border-top: 1px solid #fff; }
.prev { width: 16px; height: 25px; }
.tab { height: 25px; padding: 0 9px 0 11px; font: bold 13px/23px "Noto Sans", sans-serif; white-space: nowrap; border-top: 1px solid #888; border-right: 1px solid #888; background: linear-gradient(#e4fdff, #f6f9ff 50%, #cfdaf5 55%, #dce4f8); }
.tabend { margin-left: auto; height: 25px; display: flex; align-items: center; gap: 10px; padding-right: 6px; }
.canvas { flex: 1; min-height: 120px; margin: 0 2px 0 3px; display: flex; background: #fff; border-top: 2px solid #707070; border-left: 1px solid #707070; border-right: 1px solid #d8e0f4; border-bottom: 4px solid #e8ecf6; }
.drawing { width: 100%; height: auto; flex: 1; min-width: 0; isolation: isolate; background: #fff; }
.rubber { mix-blend-mode: difference; }
.angle { font: 11px "DejaVu Sans Condensed", sans-serif; }
.stamp { font: italic 14px "Liberation Sans", sans-serif; fill: #333; }

.props { flex: none; display: flex; margin-top: 1px; border-top: 1px solid #a4a8b4; padding: 7px 6px 3px 2px; }
.cmds { width: 72px; height: 57px; display: grid; grid-template-columns: 22px 22px 22px; grid-template-rows: 22px 22px; padding: 0 0 0 4px; background: radial-gradient(circle at 1px 2px, #999 1px, transparent 2px) 0 0 / 3px 4px repeat-y, linear-gradient(#e6ebf6, #d4d8e4); }
.cb { width: 22px; height: 22px; }
.auto { flex-direction: column; font: bold 8px/9px "DejaVu Sans Condensed", sans-serif; }
.stop { font: bold 5px "Liberation Sans", sans-serif; fill: #fff; text-anchor: middle; }
.params { flex: 1; min-width: 0; }
.panel { height: 35px; display: flex; align-items: center; padding: 0 0 2px 18px; border: 1px solid #a4a8b4; border-bottom-color: #6c7078; background: linear-gradient(#ebeff8, #dde2ec 50%, #ccd0dc); font: 11px "DejaVu Sans Condensed", sans-serif; color: #303848; }
.panel .num { height: 22px; margin: 0 1px 0 0; font-size: 12px; color: #000; }
.ck { appearance: none; width: 14px; height: 14px; flex: none; border: 1px solid #a8acb8; background: #e8ecf4; position: relative; }
.ck + label { padding-left: 1px; flex: none; }
.s { width: 21px; } .l { width: 53px; }
.cross { background: linear-gradient(45deg, transparent 47%, #008 47%, #008 53%, transparent 53%) 1px 1px / 10px 10px no-repeat, linear-gradient(-45deg, transparent 47%, #008 47%, #008 53%, transparent 53%) 1px 1px / 10px 10px no-repeat, #f4f6fa; }
.tick { margin-left: 2px; background: #f4f6fa; }
.tick::before { content: ""; position: absolute; left: 3px; top: 1px; width: 3px; height: 6px; border: solid #008; border-width: 0 1px 1px 0; transform: rotate(35deg); }
.hot { display: flex; align-items: center; height: 24px; padding-left: 1px; margin-right: 1px; border: 1px solid #b0c4e8; background: linear-gradient(#f8d8a8, #fcac50 50%, #fde490); flex: none; }
.psep { width: 2px; height: 14px; margin: 0 3px; background: #a8acb8; border-right: 1px solid #fff; }
.mode { width: 51px; }
.mb { width: 20px; height: 20px; margin-right: 2px; border: 1px solid #a8acb8; }
.lit { background: #fff; }
.ptab { display: inline-flex; align-items: center; gap: 2px; height: 20px; margin-left: 4px; padding: 0 4px 0 1px; border: 1px solid #c0dce0; border-top: 0; border-radius: 0 0 3px 3px; background: linear-gradient(#fff, #e4e8f0); font: bold 13px/18px "Noto Sans", sans-serif; color: #606470; }

.status { height: 23px; flex: none; display: flex; justify-content: space-between; align-items: center; padding: 2px 0 0 6px; border-top: 1px solid #a0a4ac; background: linear-gradient(#d8dce2, #c4c8d0 20%, #a0a4ac 35%, #c4c6cc 90%); font-weight: bold; font-size: 13px; color: #20242c; }
.status i { width: 86px; height: 21px; border-left: 1px solid #ecebe4; box-shadow: -1px 0 #8c8c8c; }

.taskbar { height: 29px; flex: none; display: flex; align-items: center; background: linear-gradient(#1a48b0, #3c88f0 8%, #2560dc 22%, #2258d8 75%, #1c48b4); color: #fff; }
.start { width: 105px; height: 29px; gap: 3px; padding-right: 12px; margin-right: 8px; border-radius: 0 10px 10px 0; background: linear-gradient(#2c7828, #60b058 10%, #3c9038 30%, #389034 75%, #286c24); font: italic bold 21px/24px "Noto Sans", sans-serif; text-shadow: 1px 1px 1px #1c4018; box-shadow: inset -3px 0 4px #206020; }
.quick { width: 152px; display: flex; align-items: center; gap: 7px; padding-left: 3px; flex: none; }
.more { margin: -10px 0 0 17px; font-size: 14px; color: #c8dcff; }
.task { width: 158px; height: 25px; margin-right: 2px; padding-left: 9px; gap: 4px; justify-content: flex-start; border-radius: 2px; background: linear-gradient(#5a98fa, #3c80f4 20%, #3878ec); font: 12px "Noto Sans", sans-serif; white-space: nowrap; }
.cur { background: #1c4eb4; border: 1px solid #163c90; }
.lang { margin-left: auto; padding: 0 1px; margin-right: 12px; background: #3a68b8; font: bold 12px/16px "Noto Sans", sans-serif; }
.tray { height: 29px; flex: none; display: flex; align-items: center; gap: 2px; padding-right: 14px; border-left: 1px solid #0a3890; background: linear-gradient(#0c68c8, #20a8f4 10%, #1290e8 30%, #1294ec 80%, #0c6cc4); }
.hide { margin-left: -10px; }
.tray time { margin-left: 6px; font: 13px "Noto Sans", sans-serif; }
```
